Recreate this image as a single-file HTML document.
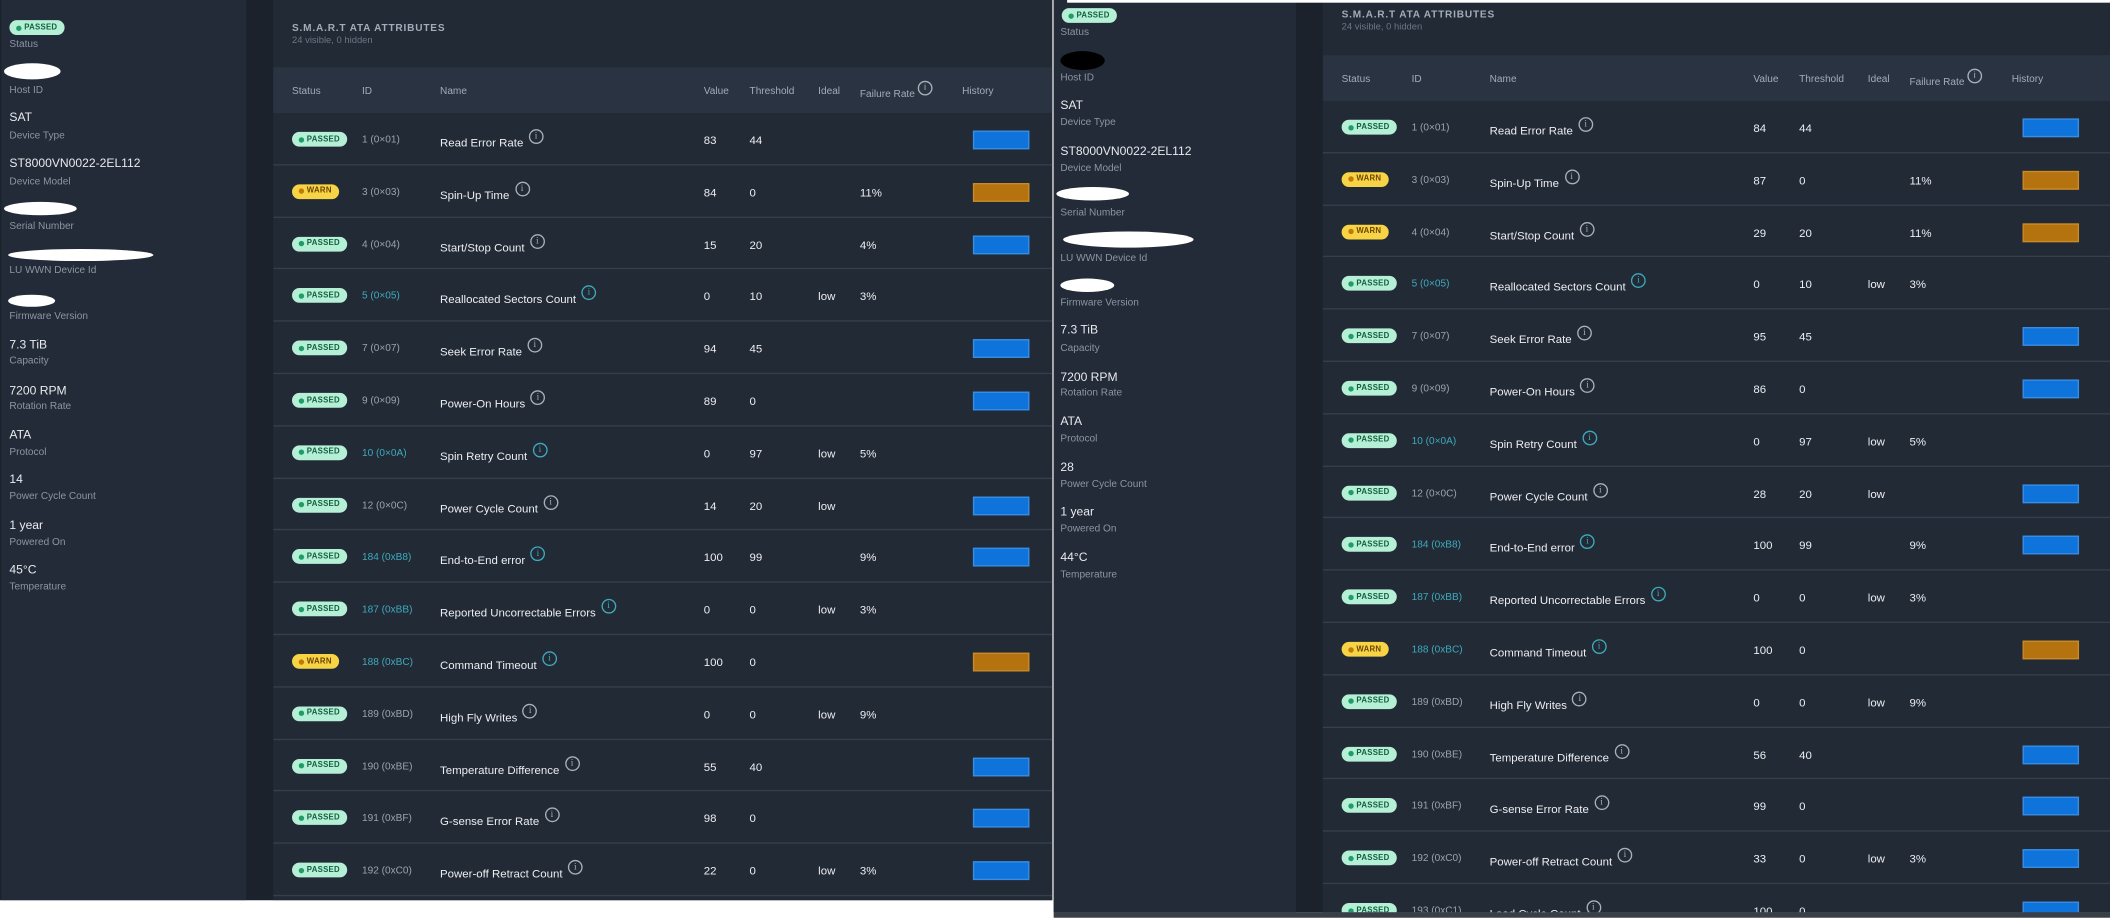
<!DOCTYPE html>
<html><head><meta charset="utf-8">
<style>
*{margin:0;padding:0;box-sizing:border-box}
html,body{width:2110px;height:918px;overflow:hidden;background:#fff}
#w{position:absolute;left:0;top:0;width:1568px;height:682px;transform:scale(1.34566);transform-origin:0 0;font-family:"Liberation Sans",sans-serif;}
.shot{position:absolute;background:#1c222c;overflow:hidden}
.side{position:absolute;top:0;background:#232b38}
.main{position:absolute;top:0;background:#222a36;overflow:hidden}
.v{position:absolute;font-size:9px;color:#e8eaed;white-space:nowrap}
.l{position:absolute;font-size:7.5px;color:#8c95a2;white-space:nowrap}
.blob{position:absolute;background:#fff;border-radius:50%}
.ttl{position:absolute;left:14px;font-size:7.5px;font-weight:bold;letter-spacing:.6px;color:#a3acb8}
.sub{position:absolute;left:14px;font-size:7px;color:#6d7683}
.hd{position:absolute;left:0;right:0;height:34px;background:#2a3341}
.hd span{position:absolute;top:13px;font-size:7.5px;color:#a3acb8;white-space:nowrap}
.r{position:absolute;left:0;right:0;height:38.8px;border-bottom:1px solid #363f4c}
.r>*{position:absolute;white-space:nowrap}
.b{position:absolute;left:14px;top:14px;height:11px;border-radius:6px;font-size:5.8px;font-weight:bold;display:flex;align-items:center;padding-left:11px;padding-right:5px;letter-spacing:.2px;white-space:nowrap}
.b:before{content:"";position:absolute;left:4.5px;top:3.5px;width:4px;height:4px;border-radius:50%}
.p{background:#b4efd6;color:#14603e}.p:before{background:#1e9d68}
.wn{background:#f6d445;color:#6f4400}.wn:before{background:#c27a06}
.id{left:66px;top:15px;font-size:7.5px;color:#9aa3ae}
.t{color:#3eaabb}
.n{left:124px;top:17px;font-size:8.5px;color:#eceef1}
.n i{display:inline-block;width:11px;height:11px;border:1px solid #a9b0ba;border-radius:50%;position:relative;top:-6px;margin-left:4px;font-style:normal;font-size:7px;line-height:9px;text-align:center;color:#a9b0ba;font-family:"Liberation Serif",serif}
.n i.tq{border-color:#3eaabb;color:#3eaabb}
.va{left:320px;top:15px;font-size:8.5px;color:#eceef1}
.th{left:354px;top:15px;font-size:8.5px;color:#eceef1}
.ie{left:405px;top:15px;font-size:8.5px;color:#eceef1}
.fr{left:436px;top:15px;font-size:8.5px;color:#eceef1}
.bar{left:520px;top:13px;width:42px;height:14px}
.bl{background:#0e74db;border:1px solid #3b8de0}
.or{background:#b5730f;border:1px solid #c98a2a}
</style></head><body><div id="w">

<!-- LEFT SCREENSHOT -->
<div class="shot" style="left:0;top:0;width:782px;height:669px">
 <div class="side" style="left:1px;width:182px;height:669px">
  <div class="b p" style="left:6px;top:15px">PASSED</div>
  <div class="l" style="left:6px;top:28px">Status</div>
  <div class="blob" style="left:2px;top:47px;width:42px;height:12px"></div>
  <div class="l" style="left:6px;top:62px">Host ID</div>
  <div class="v" style="left:6px;top:82px">SAT</div><div class="l" style="left:6px;top:96px">Device Type</div>
  <div class="v" style="left:6px;top:116px">ST8000VN0022-2EL112</div><div class="l" style="left:6px;top:130px">Device Model</div>
  <div class="blob" style="left:2px;top:150px;width:54px;height:10px"></div>
  <div class="l" style="left:6px;top:163px">Serial Number</div>
  <div class="blob" style="left:5px;top:185px;width:108px;height:9px"></div>
  <div class="l" style="left:6px;top:196px">LU WWN Device Id</div>
  <div class="blob" style="left:5px;top:219px;width:35px;height:9px"></div>
  <div class="l" style="left:6px;top:230px">Firmware Version</div>
  <div class="v" style="left:6px;top:251px">7.3 TiB</div><div class="l" style="left:6px;top:263px">Capacity</div>
  <div class="v" style="left:6px;top:285px">7200 RPM</div><div class="l" style="left:6px;top:297px">Rotation Rate</div>
  <div class="v" style="left:6px;top:318px">ATA</div><div class="l" style="left:6px;top:331px">Protocol</div>
  <div class="v" style="left:6px;top:351px">14</div><div class="l" style="left:6px;top:364px">Power Cycle Count</div>
  <div class="v" style="left:6px;top:385px">1 year</div><div class="l" style="left:6px;top:398px">Powered On</div>
  <div class="v" style="left:6px;top:418px">45°C</div><div class="l" style="left:6px;top:431px">Temperature</div>
 </div>
 <div class="main" style="left:203px;width:579px;height:669px">
  <div class="ttl" style="top:16px">S.M.A.R.T ATA ATTRIBUTES</div>
  <div class="sub" style="top:27px">24 visible, 0 hidden</div>
  <div class="hd" style="top:50px"><span style="left:14px">Status</span><span style="left:66px">ID</span><span style="left:124px">Name</span><span style="left:320px">Value</span><span style="left:354px">Threshold</span><span style="left:405px">Ideal</span><span style="left:436px;top:15px">Failure Rate <i style="display:inline-block;width:11px;height:11px;border:1px solid #a9b0ba;border-radius:50%;position:relative;top:-5px;font-style:normal;font-size:7px;line-height:9px;text-align:center">i</i></span><span style="left:512px">History</span></div>
  <div style="position:absolute;left:0;right:0;top:84px">
   <div class="r" style="top:0"><div class="b p">PASSED</div><div class="id">1 (0×01)</div><div class="n">Read Error Rate<i>i</i></div><div class="va">83</div><div class="th">44</div><div class="bar bl"></div></div>
   <div class="r" style="top:38.8px"><div class="b wn">WARN</div><div class="id">3 (0×03)</div><div class="n">Spin-Up Time<i>i</i></div><div class="va">84</div><div class="th">0</div><div class="fr">11%</div><div class="bar or"></div></div>
   <div class="r" style="top:77.6px"><div class="b p">PASSED</div><div class="id">4 (0×04)</div><div class="n">Start/Stop Count<i>i</i></div><div class="va">15</div><div class="th">20</div><div class="fr">4%</div><div class="bar bl"></div></div>
   <div class="r" style="top:116.4px"><div class="b p">PASSED</div><div class="id t">5 (0×05)</div><div class="n">Reallocated Sectors Count<i class="tq">i</i></div><div class="va">0</div><div class="th">10</div><div class="ie">low</div><div class="fr">3%</div></div>
   <div class="r" style="top:155.2px"><div class="b p">PASSED</div><div class="id">7 (0×07)</div><div class="n">Seek Error Rate<i>i</i></div><div class="va">94</div><div class="th">45</div><div class="bar bl"></div></div>
   <div class="r" style="top:194px"><div class="b p">PASSED</div><div class="id">9 (0×09)</div><div class="n">Power-On Hours<i>i</i></div><div class="va">89</div><div class="th">0</div><div class="bar bl"></div></div>
   <div class="r" style="top:232.8px"><div class="b p">PASSED</div><div class="id t">10 (0×0A)</div><div class="n">Spin Retry Count<i class="tq">i</i></div><div class="va">0</div><div class="th">97</div><div class="ie">low</div><div class="fr">5%</div></div>
   <div class="r" style="top:271.6px"><div class="b p">PASSED</div><div class="id">12 (0×0C)</div><div class="n">Power Cycle Count<i>i</i></div><div class="va">14</div><div class="th">20</div><div class="ie">low</div><div class="bar bl"></div></div>
   <div class="r" style="top:310.4px"><div class="b p">PASSED</div><div class="id t">184 (0xB8)</div><div class="n">End-to-End error<i class="tq">i</i></div><div class="va">100</div><div class="th">99</div><div class="fr">9%</div><div class="bar bl"></div></div>
   <div class="r" style="top:349.2px"><div class="b p">PASSED</div><div class="id t">187 (0xBB)</div><div class="n">Reported Uncorrectable Errors<i class="tq">i</i></div><div class="va">0</div><div class="th">0</div><div class="ie">low</div><div class="fr">3%</div></div>
   <div class="r" style="top:388px"><div class="b wn">WARN</div><div class="id t">188 (0xBC)</div><div class="n">Command Timeout<i class="tq">i</i></div><div class="va">100</div><div class="th">0</div><div class="bar or"></div></div>
   <div class="r" style="top:426.8px"><div class="b p">PASSED</div><div class="id">189 (0xBD)</div><div class="n">High Fly Writes<i>i</i></div><div class="va">0</div><div class="th">0</div><div class="ie">low</div><div class="fr">9%</div></div>
   <div class="r" style="top:465.6px"><div class="b p">PASSED</div><div class="id">190 (0xBE)</div><div class="n">Temperature Difference<i>i</i></div><div class="va">55</div><div class="th">40</div><div class="bar bl"></div></div>
   <div class="r" style="top:504.4px"><div class="b p">PASSED</div><div class="id">191 (0xBF)</div><div class="n">G-sense Error Rate<i>i</i></div><div class="va">98</div><div class="th">0</div><div class="bar bl"></div></div>
   <div class="r" style="top:543.2px"><div class="b p">PASSED</div><div class="id">192 (0xC0)</div><div class="n">Power-off Retract Count<i>i</i></div><div class="va">22</div><div class="th">0</div><div class="ie">low</div><div class="fr">3%</div><div class="bar bl"></div></div>
  </div>
 </div>
</div>

<!-- RIGHT SCREENSHOT -->
<div class="shot" style="left:783px;top:0;width:785px;height:678px">
 <div class="side" style="left:0;width:180px;height:678px">
  <div class="b p" style="left:6px;top:6px">PASSED</div>
  <div class="l" style="left:5px;top:19px">Status</div>
  <div style="position:absolute;left:5px;top:38px;width:33px;height:14px;background:#000;border-radius:50%"></div>
  <div class="l" style="left:5px;top:53px">Host ID</div>
  <div class="v" style="left:5px;top:73px">SAT</div><div class="l" style="left:5px;top:86px">Device Type</div>
  <div class="v" style="left:5px;top:107px">ST8000VN0022-2EL112</div><div class="l" style="left:5px;top:120px">Device Model</div>
  <div class="blob" style="left:2px;top:139px;width:54px;height:10px"></div>
  <div class="l" style="left:5px;top:153px">Serial Number</div>
  <div class="blob" style="left:7px;top:172px;width:97px;height:12px"></div>
  <div class="l" style="left:5px;top:187px">LU WWN Device Id</div>
  <div class="blob" style="left:5px;top:207px;width:40px;height:10px"></div>
  <div class="l" style="left:5px;top:220px">Firmware Version</div>
  <div class="v" style="left:5px;top:240px">7.3 TiB</div><div class="l" style="left:5px;top:254px">Capacity</div>
  <div class="v" style="left:5px;top:275px">7200 RPM</div><div class="l" style="left:5px;top:287px">Rotation Rate</div>
  <div class="v" style="left:5px;top:308px">ATA</div><div class="l" style="left:5px;top:321px">Protocol</div>
  <div class="v" style="left:5px;top:342px">28</div><div class="l" style="left:5px;top:355px">Power Cycle Count</div>
  <div class="v" style="left:5px;top:375px">1 year</div><div class="l" style="left:5px;top:388px">Powered On</div>
  <div class="v" style="left:5px;top:409px">44°C</div><div class="l" style="left:5px;top:422px">Temperature</div>
 </div>
 <div class="main" style="left:200px;width:585px;height:678px">
  <div class="ttl" style="top:6px">S.M.A.R.T ATA ATTRIBUTES</div>
  <div class="sub" style="top:17px">24 visible, 0 hidden</div>
  <div class="hd" style="top:41px"><span style="left:14px">Status</span><span style="left:66px">ID</span><span style="left:124px">Name</span><span style="left:320px">Value</span><span style="left:354px">Threshold</span><span style="left:405px">Ideal</span><span style="left:436px;top:15px">Failure Rate <i style="display:inline-block;width:11px;height:11px;border:1px solid #a9b0ba;border-radius:50%;position:relative;top:-5px;font-style:normal;font-size:7px;line-height:9px;text-align:center">i</i></span><span style="left:512px">History</span></div>
  <div style="position:absolute;left:0;right:0;top:75px">
   <div class="r" style="top:0"><div class="b p">PASSED</div><div class="id">1 (0×01)</div><div class="n">Read Error Rate<i>i</i></div><div class="va">84</div><div class="th">44</div><div class="bar bl"></div></div>
   <div class="r" style="top:38.8px"><div class="b wn">WARN</div><div class="id">3 (0×03)</div><div class="n">Spin-Up Time<i>i</i></div><div class="va">87</div><div class="th">0</div><div class="fr">11%</div><div class="bar or"></div></div>
   <div class="r" style="top:77.6px"><div class="b wn">WARN</div><div class="id">4 (0×04)</div><div class="n">Start/Stop Count<i>i</i></div><div class="va">29</div><div class="th">20</div><div class="fr">11%</div><div class="bar or"></div></div>
   <div class="r" style="top:116.4px"><div class="b p">PASSED</div><div class="id t">5 (0×05)</div><div class="n">Reallocated Sectors Count<i class="tq">i</i></div><div class="va">0</div><div class="th">10</div><div class="ie">low</div><div class="fr">3%</div></div>
   <div class="r" style="top:155.2px"><div class="b p">PASSED</div><div class="id">7 (0×07)</div><div class="n">Seek Error Rate<i>i</i></div><div class="va">95</div><div class="th">45</div><div class="bar bl"></div></div>
   <div class="r" style="top:194px"><div class="b p">PASSED</div><div class="id">9 (0×09)</div><div class="n">Power-On Hours<i>i</i></div><div class="va">86</div><div class="th">0</div><div class="bar bl"></div></div>
   <div class="r" style="top:232.8px"><div class="b p">PASSED</div><div class="id t">10 (0×0A)</div><div class="n">Spin Retry Count<i class="tq">i</i></div><div class="va">0</div><div class="th">97</div><div class="ie">low</div><div class="fr">5%</div></div>
   <div class="r" style="top:271.6px"><div class="b p">PASSED</div><div class="id">12 (0×0C)</div><div class="n">Power Cycle Count<i>i</i></div><div class="va">28</div><div class="th">20</div><div class="ie">low</div><div class="bar bl"></div></div>
   <div class="r" style="top:310.4px"><div class="b p">PASSED</div><div class="id t">184 (0xB8)</div><div class="n">End-to-End error<i class="tq">i</i></div><div class="va">100</div><div class="th">99</div><div class="fr">9%</div><div class="bar bl"></div></div>
   <div class="r" style="top:349.2px"><div class="b p">PASSED</div><div class="id t">187 (0xBB)</div><div class="n">Reported Uncorrectable Errors<i class="tq">i</i></div><div class="va">0</div><div class="th">0</div><div class="ie">low</div><div class="fr">3%</div></div>
   <div class="r" style="top:388px"><div class="b wn">WARN</div><div class="id t">188 (0xBC)</div><div class="n">Command Timeout<i class="tq">i</i></div><div class="va">100</div><div class="th">0</div><div class="bar or"></div></div>
   <div class="r" style="top:426.8px"><div class="b p">PASSED</div><div class="id">189 (0xBD)</div><div class="n">High Fly Writes<i>i</i></div><div class="va">0</div><div class="th">0</div><div class="ie">low</div><div class="fr">9%</div></div>
   <div class="r" style="top:465.6px"><div class="b p">PASSED</div><div class="id">190 (0xBE)</div><div class="n">Temperature Difference<i>i</i></div><div class="va">56</div><div class="th">40</div><div class="bar bl"></div></div>
   <div class="r" style="top:504.4px"><div class="b p">PASSED</div><div class="id">191 (0xBF)</div><div class="n">G-sense Error Rate<i>i</i></div><div class="va">99</div><div class="th">0</div><div class="bar bl"></div></div>
   <div class="r" style="top:543.2px"><div class="b p">PASSED</div><div class="id">192 (0xC0)</div><div class="n">Power-off Retract Count<i>i</i></div><div class="va">33</div><div class="th">0</div><div class="ie">low</div><div class="fr">3%</div><div class="bar bl"></div></div>
   <div class="r" style="top:582px"><div class="b p">PASSED</div><div class="id">193 (0xC1)</div><div class="n">Load Cycle Count<i>i</i></div><div class="va">100</div><div class="th">0</div><div class="bar bl"></div></div>
  </div>
 </div>
 <div style="position:absolute;left:10px;right:0;top:0;height:2px;background:#fff"></div>
</div>
<div style="position:absolute;left:783px;top:678px;width:785px;height:4px;background:#3a3f47"></div>
</div></body></html>
